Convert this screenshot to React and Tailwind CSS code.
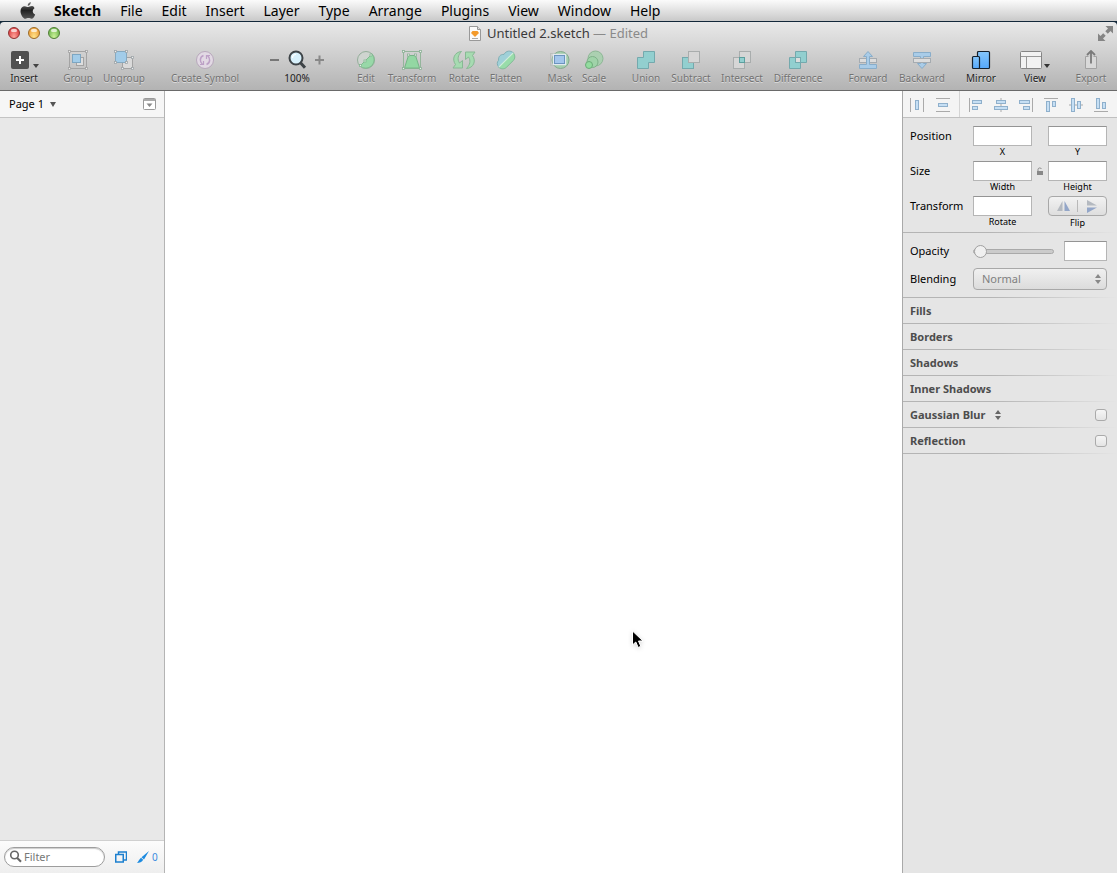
import React from "react";

const MENUS = ["File", "Edit", "Insert", "Layer", "Type", "Arrange", "Plugins", "View", "Window", "Help"];

function Icon({ w = 20, h = 20, children }) {
  return (
    <svg width={w} height={h} viewBox={`0 0 ${w} ${h}`} fill="none" aria-hidden="true" className="shrink-0">
      {children}
    </svg>
  );
}

function Handles({ points, stroke }) {
  return points.map(([x, y]) => (
    <rect key={`${x}-${y}`} x={x - 1} y={y - 1} width="2" height="2" fill="#eee" stroke={stroke} strokeWidth="0.8" />
  ));
}

const InsertIcon = () => (
  <Icon w={30}>
    <rect x="2" y="1" width="18" height="18" rx="2" fill="#505050" />
    <path d="M11 6v8M7 10h8" stroke="#fff" strokeWidth="2" />
    <path d="M24 14h6l-3 4z" fill="#444" />
  </Icon>
);

const GroupIcon = () => (
  <Icon>
    <rect x="1.5" y="1.5" width="17" height="17" stroke="#a3a3a3" />
    <rect x="8.5" y="7.5" width="7" height="8" fill="#dedede" stroke="#a3a3a3" />
    <rect x="4.5" y="4.5" width="8" height="8" fill="#a2cce9" stroke="#7da6c2" />
    <Handles stroke="#a3a3a3" points={[[1.5, 1.5], [18.5, 1.5], [1.5, 18.5], [18.5, 18.5]]} />
  </Icon>
);

const UngroupIcon = () => (
  <Icon>
    <rect x="8.5" y="7.5" width="10" height="11" fill="#dadada" stroke="#a3a3a3" />
    <rect x="1.5" y="1.5" width="11" height="11" fill="#a2cce9" stroke="#86a9c0" />
    <Handles
      stroke="#9fa6aa"
      points={[[1.5, 1.5], [12.5, 1.5], [1.5, 12.5], [12.5, 12.5], [18.5, 7.5], [18.5, 18.5], [8.5, 18.5]]}
    />
  </Icon>
);

const SymbolIcon = () => (
  <Icon>
    <circle cx="10" cy="10" r="8.5" fill="#e2d9e4" stroke="#b8a8bc" />
    <path d="M8.5 5.500C4.500 7 4.500 12 7.500 14.300M11.500 14.500C15.500 13 15.500 8 12.500 5.700" stroke="#bda0c6" strokeWidth="1.5" />
    <path d="M5 14.500h3.500V11M15 5.500h-3.500V9" stroke="#bda0c6" strokeWidth="1.200" />
  </Icon>
);

const ZoomIcon = () => (
  <Icon>
    <circle cx="9" cy="8" r="6.500" fill="#d7f0fb" stroke="#3d4347" strokeWidth="2" />
    <path d="M5.500 8A3.500 3.500 0 0 1 9 4.500" stroke="#fff" strokeWidth="1.200" />
    <path d="M13.500 12.800l4.500 5" stroke="#3d4347" strokeWidth="3" />
  </Icon>
);

const EditIcon = () => (
  <Icon>
    <circle cx="10" cy="10" r="8.500" fill="#cfd4d0" stroke="#94ae9a" />
    <path d="M16 4a8.500 8.500 0 0 1-12 12z" fill="#98d8a8" stroke="#82ba91" />
    <Handles stroke="#82ba91" points={[[15, 5], [9, 11], [4.500, 15.500]]} />
  </Icon>
);

const TransformIcon = () => (
  <Icon>
    <rect x="1.500" y="1.500" width="17" height="17" stroke="#94b59b" />
    <path d="M6.500 5.500h7l4 12.500H2.500z" fill="#93d7a3" stroke="#76b487" />
    <Handles stroke="#8ab195" points={[[1.500, 1.500], [18.500, 1.500], [1.500, 18.500], [18.500, 18.500], [6.500, 5], [13.500, 5]]} />
  </Icon>
);

const RotateIcon = () => (
  <Icon w={24}>
    <path d="M9.500 1.500C2.500 2 -.5 9 3.500 14.500L1 18h9.500V10.500L7.500 13C5 9.500 6 5 9.500 1.500z" fill="#a6dbb1" stroke="#88b894" />
    <path d="M14.500 18.500c7-.5 10-7.500 6-13L23 2h-9.500v7.500l3-2.500c2.500 3.500 1.500 8-2 11.500z" fill="#a6dbb1" stroke="#88b894" />
  </Icon>
);

const FlattenIcon = () => (
  <Icon>
    <path d="M2.800 17.200L17.200 2.800c2.200 2.500 2 5.800 0 7.800l-6.600 6.600c-2.200 2.200-5.500 2.200-7.800 0z" fill="#98dca9" stroke="#7fb995" />
    <path d="M2.800 17.200C.8 15 .8 12 2.600 10.300 2.200 6.500 4.500 4.200 8 4.400c2-3.800 6.500-4.200 9.200-1.600z" fill="#9fd0d8" stroke="#80b0b6" />
    <path d="M2.800 17.200L17.200 2.800" stroke="#d3efdc" strokeWidth="1.200" />
  </Icon>
);

const MaskIcon = () => (
  <Icon>
    <rect x=".5" y="3.500" width="15" height="12" stroke="#bbbfbc" />
    <circle cx="10.500" cy="10" r="8.500" fill="#a5cfae" stroke="#84aa8e" />
    <rect x="3.500" y="4.500" width="12" height="10" fill="#a3c6ec" stroke="#e2e9ee" strokeWidth="1.400" />
    <rect x="4.500" y="5.500" width="10" height="8" stroke="#6c94be" />
  </Icon>
);

const ScaleIcon = () => (
  <Icon>
    <circle cx="11.500" cy="8.500" r="7.500" fill="#abd0b1" stroke="#8db795" />
    <circle cx="8.500" cy="12" r="5.500" fill="#a0d3a9" stroke="#7fb189" />
    <circle cx="5" cy="15" r="3.500" fill="#93dc9f" stroke="#6cab78" />
  </Icon>
);

const TEAL = "#92cfcf";
const TEAL_EDGE = "#74a9ad";
const GRAY = "#d6d6d6";
const GRAY_EDGE = "#a9adad";

const UnionIcon = () => (
  <Icon>
    <path d="M7.500 1.500h11v11h-6v6h-11v-11h6z" fill={TEAL} stroke={TEAL_EDGE} />
  </Icon>
);
const SubtractIcon = () => (
  <Icon>
    <rect x="1.500" y="7.500" width="11" height="11" fill={TEAL} stroke={TEAL_EDGE} />
    <rect x="7.500" y="1.500" width="11" height="11" fill={GRAY} stroke={GRAY_EDGE} />
  </Icon>
);
const IntersectIcon = () => (
  <Icon>
    <rect x="7.500" y="1.500" width="11" height="11" fill={GRAY} stroke={GRAY_EDGE} />
    <rect x="1.500" y="7.500" width="11" height="11" fill={GRAY} stroke={GRAY_EDGE} />
    <rect x="7.500" y="7.500" width="5" height="5" fill={TEAL} stroke="#5c9f9e" />
  </Icon>
);
const DifferenceIcon = () => (
  <Icon>
    <path d="M7.500 1.500h11v11h-6v6h-11v-11h6z" fill={TEAL} stroke={TEAL_EDGE} />
    <rect x="7.500" y="7.500" width="5" height="5" fill="#ddd" stroke={TEAL_EDGE} />
  </Icon>
);

const ForwardIcon = () => (
  <Icon>
    <rect x="1.500" y="8.500" width="17" height="4" fill="#ddd" stroke="#a5abb0" />
    <path d="M10 1.500l4.500 5h-3v8h7v4h-17v-4h7v-8h-3z" fill="#a9cce8" stroke="#88adca" />
  </Icon>
);
const BackwardIcon = () => (
  <Icon>
    <path d="M1.500 2.500h17v4h-7v7h3l-4.500 5-4.500-5h3v-7h-7z" fill="#a9cce8" stroke="#88adca" />
    <rect x="1.500" y="8.500" width="17" height="4" fill="#ddd" stroke="#a5abb0" />
  </Icon>
);

const MirrorIcon = () => (
  <Icon>
    <defs>
      <linearGradient id="mirror-fill" x1="0" y1="0" x2="0" y2="1">
        <stop offset="0" stopColor="#85c6fb" />
        <stop offset="1" stopColor="#55a8fb" />
      </linearGradient>
    </defs>
    <rect x="6.500" y="1.500" width="12" height="17" rx="1" fill="url(#mirror-fill)" stroke="#14202c" strokeWidth="1.200" />
    <rect x="1.500" y="6.500" width="7" height="12" rx="1" fill="url(#mirror-fill)" stroke="#14202c" strokeWidth="1.200" />
  </Icon>
);

const ViewIcon = () => (
  <Icon w={30}>
    <rect x=".5" y="1.500" width="21" height="17" rx="1" fill="#f2f2f2" stroke="#858585" />
    <path d="M1 6.500h20M6.500 6.500V18" stroke="#999" />
    <path d="M24 14h6l-3 4z" fill="#333" />
  </Icon>
);

const ExportIcon = () => (
  <Icon>
    <path d="M7.500 6.500h-3v12h11v-12h-3" fill="#d9d9d9" stroke="#a2a2a2" />
    <path d="M10 13.500V1.500M6 5l4-4 4 4" stroke="#7a7a7a" strokeWidth="1.800" />
  </Icon>
);

const TOOL_GROUPS = [
  { gap: "", items: [{ label: "Insert", icon: InsertIcon, w: "w-7", on: true }] },
  {
    gap: "ml-6",
    items: [
      { label: "Group", icon: GroupIcon, w: "w-8" },
      { label: "Ungroup", icon: UngroupIcon, w: "w-10" },
    ],
  },
  { gap: "ml-[26px]", items: [{ label: "Create Symbol", icon: SymbolIcon, w: "w-[70px]" }] },
  { gap: "ml-[30px]", zoom: true, items: [] },
  {
    gap: "ml-8",
    items: [
      { label: "Edit", icon: EditIcon, w: "w-5" },
      { label: "Transform", icon: TransformIcon, w: "w-[52px]" },
      { label: "Rotate", icon: RotateIcon, w: "w-8" },
      { label: "Flatten", icon: FlattenIcon, w: "w-8" },
    ],
  },
  {
    gap: "ml-[26px]",
    items: [
      { label: "Mask", icon: MaskIcon, w: "w-6" },
      { label: "Scale", icon: ScaleIcon, w: "w-6" },
    ],
  },
  {
    gap: "ml-[26px]",
    items: [
      { label: "Union", icon: UnionIcon, w: "w-7" },
      { label: "Subtract", icon: SubtractIcon, w: "w-[42px]" },
      { label: "Intersect", icon: IntersectIcon, w: "w-10" },
      { label: "Difference", icon: DifferenceIcon, w: "w-[52px]" },
    ],
  },
  {
    gap: "ml-6",
    items: [
      { label: "Forward", icon: ForwardIcon, w: "w-10" },
      { label: "Backward", icon: BackwardIcon, w: "w-12" },
    ],
  },
  { gap: "ml-auto", items: [{ label: "Mirror", icon: MirrorIcon, w: "w-8", on: true }] },
  { gap: "ml-6", items: [{ label: "View", icon: ViewIcon, w: "w-7", on: true }] },
  { gap: "ml-[26px]", items: [{ label: "Export", icon: ExportIcon, w: "w-8" }] },
];

function Tool({ label, icon: Glyph, w, on }) {
  return (
    <button type="button" className={`flex flex-col items-center ${w} ${on ? "text-[#222]" : "text-[#727272]"}`}>
      <Glyph />
      <span className="mt-px whitespace-nowrap text-[10px] leading-[14px] [text-shadow:0_1px_0_rgba(255,255,255,0.5)]">{label}</span>
    </button>
  );
}

function ZoomTool() {
  return (
    <div className="flex w-[54px] flex-col items-center">
      <div className="flex items-center gap-2">
        <button type="button" aria-label="Zoom out">
          <Icon w={9}>
            <path d="M0 10h9" stroke="#777" strokeWidth="2" />
          </Icon>
        </button>
        <ZoomIcon />
        <button type="button" aria-label="Zoom in">
          <Icon w={9}>
            <path d="M0 10h9M4.500 5.500v9" stroke="#888" strokeWidth="2" />
          </Icon>
        </button>
      </div>
      <span className="mt-px text-[10px] leading-[14px] text-[#222]">100%</span>
    </div>
  );
}

function MenuBar() {
  return (
    <nav className="flex h-[22px] items-center border-b border-[#13283a] bg-linear-to-b from-[#fbfbfb] to-[#c9c9c9] pl-5 text-[14px] leading-5 text-black">
      <button type="button" aria-label="Apple menu">
        <svg width="16" height="20" viewBox="0 0 16 20" aria-hidden="true">
          <defs>
            <linearGradient id="apple-fill" x1="0" y1="0" x2="0" y2="1">
              <stop offset="0" stopColor="#777" />
              <stop offset=".5" stopColor="#222" />
              <stop offset="1" stopColor="#555" />
            </linearGradient>
          </defs>
          <path
            fill="url(#apple-fill)"
            d="M10.800 1c.2 1.600-1.100 3.700-3.100 3.800C7.500 3 9.200 1.200 10.800 1zM14.500 7.200c-2.600 1.600-2.200 5.200.7 6.300-.7 2-2.200 4.300-3.700 4.300-1.100 0-1.500-.7-3-.7s-2 .7-3 .7C3 17.800.5 13.500.5 10.200.5 7 2.500 5.200 4.700 5.200c1.400 0 2.600.9 3.500.9.800 0 2.200-1 3.900-1 1 .1 1.900.7 2.400 2.100z"
          />
        </svg>
      </button>
      <button type="button" className="ml-[18px] font-bold">Sketch</button>
      <div className="ml-[19px] flex gap-[19px]">
        {MENUS.map((m) => (
          <button type="button" key={m}>{m}</button>
        ))}
      </div>
    </nav>
  );
}

function TitleBar() {
  const lights = [
    ["Close", "border-[#8f3030] bg-radial-[at_50%_90%] from-[#ffa59c] to-[#d42c30]"],
    ["Minimize", "border-[#9c6a24] bg-radial-[at_50%_90%] from-[#ffe58c] to-[#ea932c]"],
    ["Zoom", "border-[#4f7d34] bg-radial-[at_50%_90%] from-[#cdf39a] to-[#5fab41]"],
  ];
  return (
    <div className="grid h-[22px] grid-cols-[1fr_auto_1fr] items-center">
      <div className="flex gap-2 pl-2">
        {lights.map(([name, look]) => (
          <button type="button" key={name} aria-label={name} className={`flex h-3 w-3 justify-center rounded-full border ${look}`}>
            <span className="mt-px h-[3px] w-1.5 rounded-full bg-white/70" />
          </button>
        ))}
      </div>
      <div className="flex items-center gap-1.5">
        <svg width="12" height="15" viewBox="0 0 12 15" aria-hidden="true">
          <path d="M.5.500h8l3 3v11H.5z" fill="#fafafa" stroke="#999" />
          <path d="M8.500.500v3h3" fill="#ddd" stroke="#999" />
          <path d="M3.500 5h5L10 7l-4 4-4-4z" fill="#f39a2b" />
          <path d="M3 12.500h6" stroke="#aaa" />
        </svg>
        <h1 className="text-[13px] leading-5 text-[#3a3a3a]">
          Untitled 2.sketch <span className="text-[#8a8a8a]">— Edited</span>
        </h1>
      </div>
      <button type="button" aria-label="Full screen" className="mr-1 justify-self-end">
        <svg width="15" height="15" viewBox="0 0 15 15" fill="#858585" aria-hidden="true">
          <path d="M7.500 0H15v7.500l-2.500-2.500-2.700 2.700-2.500-2.500L10 2.500z" />
          <path d="M7.500 15H0V7.500L2.500 10l2.700-2.700 2.500 2.500L5 12.500z" />
        </svg>
      </button>
    </div>
  );
}

function Sidebar() {
  return (
    <aside className="flex w-[165px] shrink-0 flex-col border-r border-[#b4b4b4] bg-[#e8e8e8]">
      <div className="flex h-[27px] items-center justify-between border-b border-[#c4c4c4] bg-[#f6f6f6] pl-[9px] pr-2">
        <button type="button" className="flex items-center gap-1.5 text-[11px] leading-4 text-black">
          Page 1
          <svg width="6" height="5" viewBox="0 0 6 5" aria-hidden="true">
            <path d="M0 0h6L3 5z" fill="#555" />
          </svg>
        </button>
        <button type="button" aria-label="Toggle page list">
          <svg width="13" height="12" viewBox="0 0 13 12" fill="none" aria-hidden="true">
            <rect x=".5" y=".5" width="12" height="11" rx="1" fill="#fff" stroke="#999" />
            <path d="M1 2h11" stroke="#aaa" strokeWidth="2" />
            <path d="M3.500 5.500h6L6.500 9z" fill="#888" />
          </svg>
        </button>
      </div>
      <div className="flex-1" />
      <div className="flex h-[33px] items-center border-t border-[#d0d0d0] bg-linear-to-b from-[#fcfcfc] to-[#eeeeee] px-1 pb-px">
        <label className="flex h-5 w-[101px] items-center gap-0.5 rounded-full border border-[#9d9d9d] bg-white pl-1 shadow-[inset_0_1px_1px_#ccc]">
          <svg width="13" height="13" viewBox="0 0 13 13" fill="none" stroke="#666" className="shrink-0" aria-hidden="true">
            <circle cx="5.500" cy="5" r="3.800" strokeWidth="1.600" />
            <path d="M8 7.800l4 4" strokeWidth="2.200" />
          </svg>
          <input type="text" aria-label="Filter layers" placeholder="Filter" className="w-full min-w-0 bg-transparent text-[11px] leading-4 outline-none placeholder:text-[#777]" />
        </label>
        <button type="button" aria-label="Show slices" className="ml-[10px]">
          <svg width="12" height="12" viewBox="0 0 12 12" fill="none" stroke="#1d80cf" strokeWidth="1.500" aria-hidden="true">
            <path d="M3.500 3V1h8v8H9" />
            <rect x=".75" y="3.500" width="7.500" height="7.500" />
          </svg>
        </button>
        <button type="button" aria-label="Slices" className="ml-[10px] flex items-center gap-[3px] text-[10px] leading-4 text-[#3b8be0]">
          <svg width="12" height="12" viewBox="0 0 12 12" fill="#1d8be0" aria-hidden="true">
            <path d="M12 0L7 8.500 4.500 6.300zM4 6.800l2.200 2C5 11 2.500 12 0 12c1.500-1.200 2.300-4 4-5.200z" />
          </svg>
          0
        </button>
      </div>
    </aside>
  );
}

const B = { fill: "#c6dff4", stroke: "#8fb0cc" };
const L = { stroke: "#aaa" };

const ALIGN_ICONS = [
  ["Distribute horizontally", <g key="a"><path d="M1.500 1v14M14.500 1v14" {...L} /><rect x="6.500" y="3.500" width="3" height="9" {...B} /></g>],
  ["Distribute vertically", <g key="b"><path d="M1 1.500h14M1 14.500h14" {...L} /><rect x="3.500" y="6.500" width="9" height="3" {...B} /></g>],
  ["Align left", <g key="c"><path d="M1.500 1v14" {...L} /><rect x="4.500" y="3.500" width="9" height="3" {...B} /><rect x="4.500" y="9.500" width="5" height="3" {...B} /></g>],
  ["Align centers", <g key="d"><path d="M8 1v14" {...L} /><rect x="3.500" y="3.500" width="9" height="3" {...B} /><rect x="1.500" y="9.500" width="13" height="3" {...B} /></g>],
  ["Align right", <g key="e"><path d="M14.500 1v14" {...L} /><rect x="1.500" y="3.500" width="10" height="3" {...B} /><rect x="5.500" y="9.500" width="6" height="3" {...B} /></g>],
  ["Align top", <g key="f"><path d="M1 1.500h14" {...L} /><rect x="3.500" y="4.500" width="3" height="10" {...B} /><rect x="9.500" y="4.500" width="3" height="5" {...B} /></g>],
  ["Align middles", <g key="g"><path d="M1 8h14" {...L} /><rect x="3.500" y="1.500" width="3" height="13" {...B} /><rect x="9.500" y="4.500" width="3" height="7" {...B} /></g>],
  ["Align bottom", <g key="h"><path d="M1 14.500h14" {...L} /><rect x="3.500" y="1.500" width="3" height="10" {...B} /><rect x="9.500" y="5.500" width="3" height="6" {...B} /></g>],
];

function AlignButton({ item: [name, art] }) {
  return (
    <button type="button" aria-label={name}>
      <Icon w={16} h={16}>{art}</Icon>
    </button>
  );
}

function Field({ id, label, hint }) {
  return (
    <div className="flex w-[59px] flex-col items-center pb-1">
      <input id={id} type="text" aria-label={label} className="h-5 w-full border border-[#b5b5b5] border-t-[#949494] bg-white px-1 text-[11px] outline-none" />
      <label htmlFor={id} className="text-[9px] leading-[11px] text-black">{hint}</label>
    </div>
  );
}

function Rule() {
  return <div className="h-px bg-linear-to-r from-[#b4b4b4] from-40% to-[#e5e5e5]" />;
}

function Steppers({ color }) {
  return (
    <svg width="6" height="10" viewBox="0 0 6 10" fill={color} aria-hidden="true">
      <path d="M0 4l3-4 3 4zM0 6h6l-3 4z" />
    </svg>
  );
}

const ROW = "grid grid-cols-[63px_59px_1fr_59px]";
const NAME = "text-[11px] leading-5 text-black";

function Inspector() {
  return (
    <aside className="w-[215px] shrink-0 border-l border-[#a9a9a9] bg-[#e5e5e5]">
      <div className="flex h-[27px] items-center border-b border-[#c0c0c0] bg-[#f4f4f4] pl-[6px] pr-2">
        <div className="flex gap-[10px] pt-px">
          {ALIGN_ICONS.slice(0, 2).map((i) => <AlignButton key={i[0]} item={i} />)}
        </div>
        <div className="mx-2 h-full w-px bg-[#d4d4d4]" />
        <div className="flex flex-1 justify-between pt-px">
          {ALIGN_ICONS.slice(2).map((i) => <AlignButton key={i[0]} item={i} />)}
        </div>
      </div>

      <div className="h-[114px] pl-[7px] pr-[10px] pt-2">
        <div className={ROW}>
          <span className={NAME}>Position</span>
          <Field id="pos-x" label="X" hint="X" />
          <span />
          <Field id="pos-y" label="Y" hint="Y" />
        </div>
        <div className={ROW}>
          <span className={NAME}>Size</span>
          <Field id="size-w" label="Width" hint="Width" />
          <button type="button" aria-label="Lock proportions" className="flex h-5 items-center justify-center">
            <svg width="8" height="9" viewBox="0 0 8 9" fill="none" aria-hidden="true">
              <rect x="1" y="4" width="6" height="4" fill="#888" />
              <path d="M2 4V2.500C2 .5 5 .5 5.500 2" stroke="#888" />
            </svg>
          </button>
          <Field id="size-h" label="Height" hint="Height" />
        </div>
        <div className={ROW}>
          <span className={NAME}>Transform</span>
          <Field id="rotate" label="Rotate" hint="Rotate" />
          <span />
          <div className="flex flex-col items-center">
            <div className="flex h-5 w-full items-center rounded-[4px] border border-[#a8a8a8] bg-linear-to-b from-[#f2f2f2] to-[#dedede]">
              <button type="button" aria-label="Flip horizontal" className="flex flex-1 justify-center">
                <svg width="13" height="12" viewBox="0 0 13 12" aria-hidden="true">
                  <path d="M5.500 1v10H0z" fill="#b4b9c0" />
                  <path d="M7.500 1v10H13z" fill="#93a6c8" />
                </svg>
              </button>
              <span className="h-3 w-px bg-[#b8b8b8]" />
              <button type="button" aria-label="Flip vertical" className="flex flex-1 justify-center">
                <svg width="12" height="13" viewBox="0 0 12 13" aria-hidden="true">
                  <path d="M1 5.500h10L1 0z" fill="#b4b9c0" />
                  <path d="M1 7.500h10L1 13z" fill="#93a6c8" />
                </svg>
              </button>
            </div>
            <span className="text-[9px] leading-[14px] text-black">Flip</span>
          </div>
        </div>
      </div>
      <Rule />

      <div className="h-16 pl-[7px] pr-[10px] pt-2">
        <div className="flex items-center">
          <label htmlFor="opacity" className={`w-[63px] ${NAME}`}>Opacity</label>
          <input
            id="opacity"
            type="range"
            defaultValue="0"
            className="h-[5px] w-[81px] appearance-none rounded-full border border-[#a9a9a9] bg-[#cbcbcb] [&::-webkit-slider-thumb]:h-[13px] [&::-webkit-slider-thumb]:w-[13px] [&::-webkit-slider-thumb]:appearance-none [&::-webkit-slider-thumb]:rounded-full [&::-webkit-slider-thumb]:border [&::-webkit-slider-thumb]:border-[#a0a0a0] [&::-webkit-slider-thumb]:bg-[#f0f0f0]"
          />
          <input type="text" aria-label="Opacity value" className="ml-auto h-5 w-[43px] border border-[#b5b5b5] border-t-[#949494] bg-white px-1 text-[11px] outline-none" />
        </div>
        <div className="mt-[7px] flex h-[21px] items-center">
          <label htmlFor="blending" className={`w-[63px] ${NAME}`}>Blending</label>
          <div className="relative flex flex-1">
            <select id="blending" className="h-[22px] w-full appearance-none rounded-[4px] border border-[#a8a8a8] bg-linear-to-b from-[#f0f0f0] to-[#dcdcdc] px-2 text-[11px] leading-4 text-[#808080]">
              <option>Normal</option>
            </select>
            <span className="pointer-events-none absolute inset-y-0 right-1.5 flex items-center">
              <Steppers color="#888" />
            </span>
          </div>
        </div>
      </div>
      <Rule />

      {["Fills", "Borders", "Shadows", "Inner Shadows", "Gaussian Blur", "Reflection"].map((name) => (
        <section key={name}>
          <div className="flex h-[25px] items-center pl-[7px] pr-[10px] text-[11px] leading-4 text-[#4d4d4d]">
            <h2 className="font-bold">{name}</h2>
            {name === "Gaussian Blur" && (
              <button type="button" aria-label="Blur type" className="ml-[10px]">
                <Steppers color="#666" />
              </button>
            )}
            {(name === "Gaussian Blur" || name === "Reflection") && (
              <input type="checkbox" aria-label={name} className="ml-auto h-3 w-3 appearance-none rounded-[3px] border border-[#aaa] bg-linear-to-b from-[#f6f6f6] to-[#e4e4e4] checked:bg-[#7fb4ea]" />
            )}
          </div>
          <Rule />
        </section>
      ))}
    </aside>
  );
}

export default function App() {
  return (
    <div className="flex min-h-screen flex-col bg-[#13283a] font-['Noto_Sans',sans-serif]">
      <MenuBar />
      <header className="rounded-t-[4px] border-b border-[#6a6a6a] bg-linear-to-b from-[#e9e9e9] to-[#b3b3b3]">
        <TitleBar />
        <div className="flex h-[46px] items-start px-[10px] pt-1.5">
          {TOOL_GROUPS.map((group, i) => (
            <div key={i} className={`flex shrink-0 gap-[10px] ${group.gap}`}>
              {group.zoom ? <ZoomTool /> : group.items.map((t) => <Tool key={t.label} {...t} />)}
            </div>
          ))}
        </div>
      </header>
      <div className="flex flex-1">
        <Sidebar />
        <main className="relative min-w-0 flex-1 bg-white">
          <svg width="14" height="20" viewBox="0 0 14 20" className="absolute left-[466px] top-[539px] drop-shadow-sm" aria-hidden="true">
            <path d="M1.500 1v14l3.300-3 2.400 5.500 2.600-1.200L7.500 11H12z" fill="#000" stroke="#fff" />
          </svg>
        </main>
        <Inspector />
      </div>
    </div>
  );
}
